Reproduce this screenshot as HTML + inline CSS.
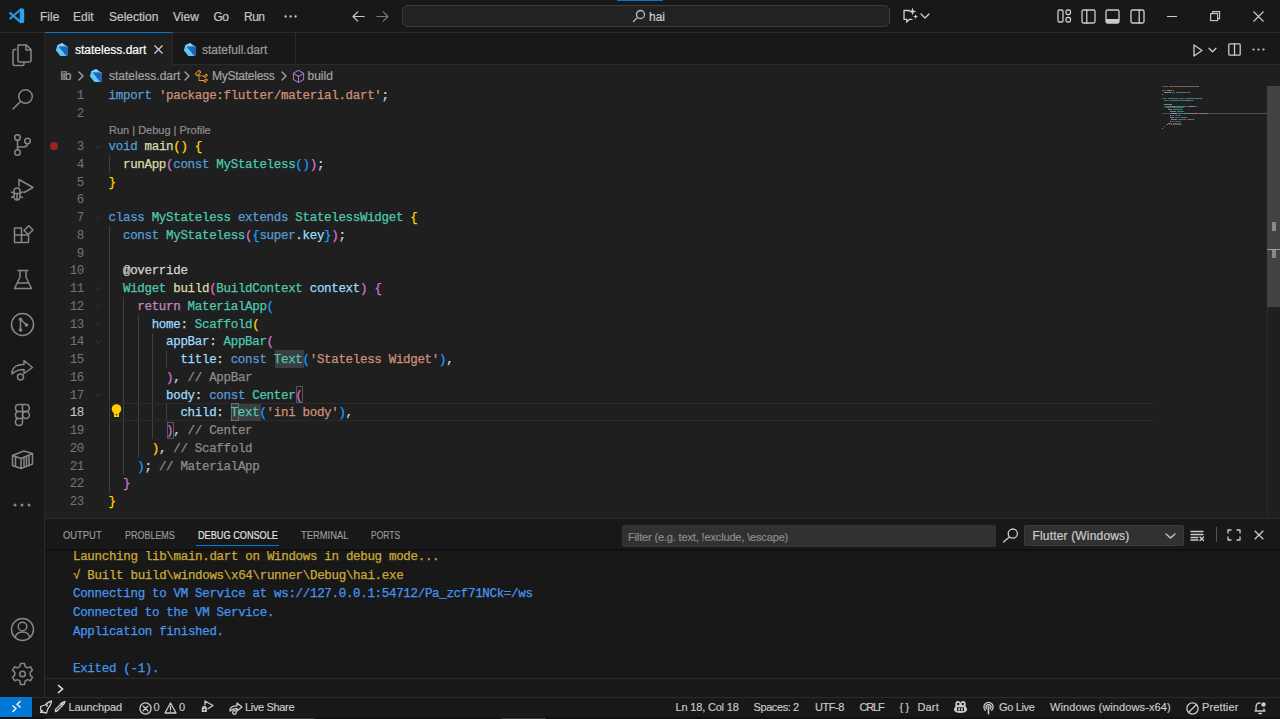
<!DOCTYPE html>
<html><head><meta charset="utf-8">
<style>
*{margin:0;padding:0;box-sizing:border-box}
html,body{width:1280px;height:719px;overflow:hidden;background:#1f1f1f;font-family:"Liberation Sans",sans-serif;color:#ccc}
div,span.a,svg{position:absolute}
svg{overflow:visible}
#title{left:0;top:0;width:1280px;height:33px;background:#181818;border-bottom:1px solid #2b2b2b}
.menu{-webkit-text-stroke:0.2px currentColor;top:9.7px;font-size:12px;color:#c4c4c4;line-height:14px;white-space:nowrap}
#act{left:0;top:33px;width:45px;height:664px;background:#181818;border-right:1px solid #2b2b2b}
#tabs{left:45px;top:33px;width:1235px;height:32px;background:#181818;border-bottom:1px solid #2b2b2b}
.tabt{-webkit-text-stroke:0.2px currentColor;font-size:12px;line-height:14px;white-space:nowrap}
#editor{left:45px;top:65px;width:1235px;height:453px;background:#1f1f1f}
.code{-webkit-text-stroke:0.25px currentColor;left:108.6px;font-family:"Liberation Mono",monospace;font-size:12.5px;letter-spacing:-0.32px;white-space:pre;line-height:17.75px;color:#d4d4d4}
.ln{left:43px;width:41px;font-family:"Liberation Mono",monospace;font-size:12.5px;letter-spacing:-0.32px;line-height:17.75px;color:#6e7681;text-align:right}
.ln.cur{color:#cccccc}
.guide{width:1px;background:#404040}
#panel{left:45px;top:518px;width:1235px;height:179px;background:#181818;border-top:1px solid #2b2b2b}
.ptab{-webkit-text-stroke:0.15px currentColor;top:529px;font-size:11px;line-height:13px;color:#9d9d9d;white-space:nowrap;transform-origin:0 0;transform:scaleX(0.84)}
.con{-webkit-text-stroke:0.25px currentColor;left:73px;font-family:"Liberation Mono",monospace;font-size:12.5px;letter-spacing:-0.32px;white-space:pre;line-height:18.5px}
#status{left:0;top:697px;width:1280px;height:22px;background:#181818;border-top:1px solid #2b2b2b}
.st{-webkit-text-stroke:0.15px currentColor;top:701.4px;font-size:11px;line-height:13px;color:#cccccc;white-space:nowrap}
.k{color:#569cd6}.s{color:#ce9178}.f{color:#dcdcaa}.c{color:#4ec9b0}.v{color:#9cdcfe}.p{color:#d4d4d4}.r{color:#c586c0}
.b1{color:#ffd700}.b2{color:#da70d6}.b3{color:#179fff}.cm{color:#8c8c8c}.at{color:#d4d4d4}
.ic{stroke:#cccccc;fill:none;stroke-width:1.3;stroke-linecap:round;stroke-linejoin:round}
.ia{stroke:#868686;fill:none;stroke-width:1.5;stroke-linecap:round;stroke-linejoin:round}
</style></head><body>
<!-- TITLE BAR -->
<div id="title"></div>
<svg style="left:0;top:0" width="30" height="30" viewBox="0 0 30 30"><path d="M10.2 13.2 L20.8 22.2" stroke="#1f9ce8" stroke-width="2.3" stroke-linecap="round"/><path d="M10.2 18.6 L20.8 9.3" stroke="#2a8fd0" stroke-width="2.1" stroke-linecap="round"/><rect x="19.8" y="8.4" width="4.4" height="14.6" rx="1.6" fill="#2ba3ee"/></svg>
<div class="menu" style="left:40px">File</div>
<div class="menu" style="left:73px">Edit</div>
<div class="menu" style="left:109px">Selection</div>
<div class="menu" style="left:173px">View</div>
<div class="menu" style="left:213.5px;letter-spacing:-0.5px">Go</div>
<div class="menu" style="left:244px;letter-spacing:-0.5px">Run</div>
<svg style="left:284px;top:14.5px" width="14" height="3"><circle cx="1.6" cy="1.5" r="1.15" fill="#ccc"/><circle cx="6.6" cy="1.5" r="1.15" fill="#ccc"/><circle cx="11.6" cy="1.5" r="1.15" fill="#ccc"/></svg>
<svg style="left:351.5px;top:10.5px" width="13" height="11" viewBox="0 0 13 11"><path class="ic" style="stroke-width:1.15" d="M1 5.5 H12.2 M5.8 0.8 L1 5.5 L5.8 10.2"/></svg>
<svg style="left:376px;top:10.5px" width="13" height="11" viewBox="0 0 13 11"><path class="ic" style="stroke:#7a7a7a;stroke-width:1.15" d="M0.8 5.5 H12 M7.2 0.8 L12 5.5 L7.2 10.2"/></svg>
<div style="left:617px;top:0;width:46px;height:1.3px;background:#0078d4"></div>
<div style="left:402px;top:5px;width:488px;height:22px;background:#222222;border:1px solid #3c3c3c;border-radius:6px"></div>
<svg style="left:632px;top:9px" width="14" height="14" viewBox="0 0 14 14"><circle class="ic" cx="8.5" cy="5.5" r="4" style="stroke:#bbb"/><path class="ic" style="stroke:#bbb" d="M5.6 8.4 L1.5 12.5"/></svg>
<div class="menu" style="left:649px;color:#cccccc">hai</div>
<svg style="left:902px;top:7px" width="18" height="17" viewBox="0 0 18 17"><path class="ic" d="M7.5 3.5 H2 V12.3 H4.8 L4.6 15 L7.6 12.3 H10"/><path fill="#ccc" d="M10.5 0.6 L11.5 3.4 L14.3 4.4 L11.5 5.4 L10.5 8.2 L9.5 5.4 L6.7 4.4 L9.5 3.4 Z M13.6 7 L14.3 8.9 L16.2 9.6 L14.3 10.3 L13.6 12.2 L12.9 10.3 L11 9.6 L12.9 8.9 Z"/></svg>
<svg style="left:920px;top:13px" width="10" height="6" viewBox="0 0 10 6"><path class="ic" d="M1 1 L5 5 L9 1"/></svg>
<svg style="left:1057px;top:9px" width="15" height="14" viewBox="0 0 15 14"><rect class="ic" x="1" y="1" width="5" height="12" rx="1.3"/><rect class="ic" x="9" y="1" width="4.5" height="4.5" rx="1.5"/><rect class="ic" x="9" y="8.5" width="4.5" height="4.5" rx="1.5"/></svg>
<svg style="left:1080.5px;top:8.5px" width="15" height="15" viewBox="0 0 15 15"><rect class="ic" x="1" y="1" width="13" height="13" rx="1.5"/><path class="ic" d="M5.8 1 V14"/></svg>
<svg style="left:1105px;top:8.5px" width="15" height="15" viewBox="0 0 15 15"><rect class="ic" x="1" y="1" width="13" height="13" rx="1.5"/><path d="M1 10 H14 V12.5 Q14 14 12.5 14 H2.5 Q1 14 1 12.5 Z" fill="#ccc"/></svg>
<svg style="left:1129.5px;top:8.5px" width="15" height="15" viewBox="0 0 15 15"><rect class="ic" x="1" y="1" width="13" height="13" rx="1.5"/><path class="ic" d="M9.2 1 V14"/></svg>
<div style="left:1167px;top:16px;width:10px;height:1px;background:#ccc"></div>
<svg style="left:1210px;top:11px" width="11" height="10" viewBox="0 0 11 10"><rect x="0.6" y="2.6" width="7" height="7" fill="none" stroke="#ccc" stroke-width="1.1"/><path d="M2.6 2.6 V0.6 H9.6 V7.6 H7.6" fill="none" stroke="#ccc" stroke-width="1.1"/></svg>
<svg style="left:1253px;top:11px" width="11" height="11" viewBox="0 0 11 11"><path d="M0.5 0.5 L10.5 10.5 M10.5 0.5 L0.5 10.5" stroke="#ccc" stroke-width="1.1"/></svg>

<!-- ACTIVITY BAR -->
<div id="act"></div>

<svg style="left:11px;top:43px" width="22" height="24" viewBox="0 0 22 24"><path class="ia" d="M5 6.5 H3.5 Q2 6.5 2 8 V21 Q2 22.5 3.5 22.5 H11.5 Q13 22.5 13 21 V19.5"/><path class="ia" d="M7 2 H15.5 L20 6.5 V17.5 Q20 19 18.5 19 H8.5 Q7 19 7 17.5 V3.5 Q7 2 8.5 2 Z M15 2 V7 H20"/></svg>
<svg style="left:11px;top:88px" width="24" height="24" viewBox="0 0 24 24"><circle class="ia" cx="14.5" cy="8.5" r="6.8"/><path class="ia" d="M9.6 13.4 L2 21"/></svg>
<svg style="left:12px;top:133px" width="22" height="24" viewBox="0 0 22 24"><circle class="ia" cx="5.5" cy="4.5" r="2.8"/><circle class="ia" cx="5.5" cy="19.5" r="2.8"/><circle class="ia" cx="15.5" cy="8" r="2.8"/><path class="ia" d="M5.5 7.3 V16.7 M15.5 10.8 Q15.5 14 11 14 H5.5"/></svg>
<svg style="left:10px;top:178px" width="25" height="24" viewBox="0 0 25 24"><path class="ia" d="M9 8 V1.5 L23 9.5 L14 14.5"/><path class="ia" d="M4 13 Q4 10 7 10 Q10 10 10 13 V18 Q10 22 7 22 Q4 22 4 18 Z M4 15.5 H10 M1.5 14 L4 15 M1.5 19.5 L4 18.5 M12.5 14 L10 15 M12.5 19.5 L10 18.5 M7 15.5 V22"/></svg>
<svg style="left:12px;top:223px" width="23" height="23" viewBox="0 0 23 23"><path class="ia" d="M2.5 5 H9.5 V12 H16.5 V19.5 H2.5 Z M9.5 12 V19.5 M2.5 12 H9.5"/><path class="ia" d="M13 8.5 L17.8 3.7 L22 8 L17.3 12.5 Z" transform="translate(-1 -1)"/></svg>
<svg style="left:13px;top:269px" width="20" height="22" viewBox="0 0 20 22"><path class="ia" d="M5 1.5 H15 M7 1.5 V8 L1.5 19.5 H18.5 L13 8 V1.5 M4.5 14 H15.5"/></svg>
<svg style="left:10px;top:312px" width="25" height="25" viewBox="0 0 25 25"><circle class="ia" cx="12.5" cy="12.5" r="11"/><circle cx="10.5" cy="7.3" r="1.8" fill="#868686"/><circle cx="16.5" cy="13" r="1.8" fill="#868686"/><circle cx="10.5" cy="18" r="1.8" fill="#868686"/><path class="ia" d="M10.5 7.3 V18 M10.5 7.3 L16.5 13"/></svg>
<svg style="left:10px;top:358px" width="25" height="24" viewBox="0 0 25 24"><path class="ia" d="M2 13.5 Q4 6 14 6.5 V2.5 L22.5 9.5 L14 15.5 V11.5 Q6.5 11.5 2 16 Z"/><circle class="ia" cx="10.5" cy="19" r="3"/></svg>
<svg style="left:14px;top:403px" width="17" height="24" viewBox="0 0 17 24"><path class="ia" d="M8.5 1.5 H4.8 Q1.5 1.5 1.5 5 Q1.5 8.5 4.8 8.5 H8.5 Z M8.5 1.5 H12 Q15.3 1.5 15.3 5 Q15.3 8.5 12 8.5 H8.5 M8.5 8.5 H4.8 Q1.5 8.5 1.5 12 Q1.5 15.5 4.8 15.5 H8.5 Z M8.5 15.5 V19 Q8.5 22.5 5 22.5 Q1.5 22.5 1.5 19 Q1.5 15.5 4.8 15.5"/><circle class="ia" cx="12" cy="12" r="3.4"/></svg>
<svg style="left:11px;top:449px" width="23" height="21" viewBox="0 0 23 21"><path class="ia" d="M1.5 6.5 L13 2 L21.5 4.5 L21.5 15 L10 19.5 L1.5 16.5 Z M1.5 6.5 L10 9.5 L21.5 4.5 M10 9.5 V19.5 M4.5 8 V17.5 M13 9.5 V17 M15.5 8.5 V16 M18 7.5 V15"/></svg>
<svg style="left:13px;top:502.8px" width="18" height="4"><circle cx="2" cy="2" r="1.5" fill="#868686"/><circle cx="9" cy="2" r="1.5" fill="#868686"/><circle cx="16" cy="2" r="1.5" fill="#868686"/></svg>
<svg style="left:10px;top:617px" width="25" height="25" viewBox="0 0 25 25"><circle class="ia" cx="12.5" cy="12.5" r="11"/><circle class="ia" cx="12.5" cy="9.5" r="4.3"/><path class="ia" d="M5 20.5 Q6.5 15 12.5 15 Q18.5 15 20 20.5"/></svg>
<svg style="left:10px;top:662px" width="25" height="24" viewBox="0 0 25 24"><path class="ia" d="M10.5 1.5 H14.5 L15.2 4.6 L17.6 5.9 L20.5 4.8 L22.5 8.3 L20.2 10.4 V13.1 L22.5 15.2 L20.5 18.7 L17.6 17.6 L15.2 18.9 L14.5 22.5 H10.5 L9.8 18.9 L7.4 17.6 L4.5 18.7 L2.5 15.2 L4.8 13.1 V10.4 L2.5 8.3 L4.5 4.8 L7.4 5.9 L9.8 4.6 Z"/><circle class="ia" cx="12.5" cy="12" r="2.8"/></svg>


<!-- TABS -->
<div id="tabs"></div>
<div style="left:45px;top:32px;width:128px;height:33px;background:#1f1f1f;border-top:1px solid #0078d4;border-right:1px solid #2b2b2b"></div>
<div style="left:173px;top:33px;width:123px;height:32px;border-right:1px solid #2b2b2b"></div>
<svg style="left:55px;top:42px" width="14" height="14" viewBox="0 0 14 14"><path fill="#5cc6f6" d="M7.2 1 L13 4.9 L13 13.1 L11.2 14 L5.4 14 L0.8 8.2 L2.3 3.3 Z"/><path fill="#1f64b5" d="M3.5 4.3 L10 4.2 L13 5.6 L13 13 L11.3 14 Z"/><path fill="#8ad8fa" d="M7.2 1 L10 4.2 L3.5 4.3 L2.3 3.3 Z" opacity="0.8"/></svg><svg style="left:183px;top:42px" width="14" height="14" viewBox="0 0 14 14"><path fill="#5cc6f6" d="M7.2 1 L13 4.9 L13 13.1 L11.2 14 L5.4 14 L0.8 8.2 L2.3 3.3 Z"/><path fill="#1f64b5" d="M3.5 4.3 L10 4.2 L13 5.6 L13 13 L11.3 14 Z"/><path fill="#8ad8fa" d="M7.2 1 L10 4.2 L3.5 4.3 L2.3 3.3 Z" opacity="0.8"/></svg>
<div class="tabt" style="left:75px;top:43px;color:#ffffff">stateless.dart</div>
<svg style="left:154px;top:45px" width="9" height="9" viewBox="0 0 9 9"><path d="M0.5 0.5 L8.5 8.5 M8.5 0.5 L0.5 8.5" stroke="#ccc" stroke-width="1.3"/></svg>
<div class="tabt" style="left:202px;top:43px;color:#9d9d9d">statefull.dart</div>
<svg style="left:1193px;top:44px" width="10" height="13" viewBox="0 0 10 13"><path class="ic" d="M1 1 L9 6.5 L1 12 Z"/></svg>
<svg style="left:1208px;top:47px" width="9" height="6" viewBox="0 0 9 6"><path class="ic" d="M1 1.2 L4.5 4.7 L8 1.2"/></svg>
<svg style="left:1228px;top:43px" width="13" height="13" viewBox="0 0 13 13"><rect class="ic" x="0.8" y="0.8" width="11.4" height="11.4" rx="1"/><path class="ic" d="M6.5 0.8 V12.2"/></svg>
<svg style="left:1252px;top:48px" width="13" height="3"><circle cx="1.5" cy="1.5" r="1.1" fill="#ccc"/><circle cx="6.5" cy="1.5" r="1.1" fill="#ccc"/><circle cx="11.5" cy="1.5" r="1.1" fill="#ccc"/></svg>

<!-- EDITOR -->
<div id="editor"></div>
<!-- breadcrumbs -->
<div class="tabt" style="left:60.5px;top:69px;color:#a3a3a3;letter-spacing:-0.5px">lib</div>
<svg style="left:78px;top:71px" width="6" height="10" viewBox="0 0 6 10"><path class="ic" style="stroke:#a9a9a9" d="M1 1 L5 5 L1 9"/></svg>
<svg style="left:89px;top:68px" width="14" height="14" viewBox="0 0 14 14"><path fill="#5cc6f6" d="M7.2 1 L13 4.9 L13 13.1 L11.2 14 L5.4 14 L0.8 8.2 L2.3 3.3 Z"/><path fill="#1f64b5" d="M3.5 4.3 L10 4.2 L13 5.6 L13 13 L11.3 14 Z"/><path fill="#8ad8fa" d="M7.2 1 L10 4.2 L3.5 4.3 L2.3 3.3 Z" opacity="0.8"/></svg>
<div class="tabt" style="left:109px;top:69px;color:#a3a3a3">stateless.dart</div>
<svg style="left:184px;top:71px" width="6" height="10" viewBox="0 0 6 10"><path class="ic" style="stroke:#a9a9a9" d="M1 1 L5 5 L1 9"/></svg>
<svg style="left:194px;top:68.5px" width="15" height="15" viewBox="0 0 16 16"><path fill="#ee9d28" d="M11.34 9.71h.71l2.67-2.67v-.71L13.38 5h-.7l-1.82 1.81h-5V5.56l1.86-1.85V3l-2-2H5L1 5v.71l2 2h.71l1.14-1.15v5.79l.5.5H10v.52l1.33 1.34h.71l2.67-2.670v-.71L13.37 10h-.7l-1.86 1.85h-5v-4H10v.48l1.34 1.38zm1.69-3.65l.63.63-2 2-.63-.63 2-2zm0 5l.63.63-2 2-.63-.63 2-2zM3.350 6.65L2.06 5.36 5.34 2.08l1.29 1.29-3.28 3.28z"/></svg>
<div class="tabt" style="left:212px;top:69px;color:#a3a3a3;letter-spacing:-0.25px">MyStateless</div>
<svg style="left:281px;top:71px" width="6" height="10" viewBox="0 0 6 10"><path class="ic" style="stroke:#a9a9a9" d="M1 1 L5 5 L1 9"/></svg>
<svg style="left:290.5px;top:68.5px" width="15" height="15" viewBox="0 0 16 16"><path fill="#b180d7" d="M13.51 4l-5-3h-1l-5 3-.49.86v6l.49.85 5 3h1l5-3 .49-.85v-6L13.51 4zm-6 9.56l-4.5-2.7V5.7l4.5 2.45v5.41zM3.27 4.7l4.74-2.84 4.74 2.84-4.74 2.59L3.27 4.7zm9.74 6.160l-4.5 2.7V8.15l4.5-2.45v5.16z"/></svg>
<div class="tabt" style="left:307.5px;top:69px;color:#a3a3a3">build</div>

<div class="guide" style="left:109.00px;top:155.25px;height:17.75px"></div>
<div class="guide" style="left:109.00px;top:226.25px;height:266.25px"></div>
<div class="guide" style="left:123.36px;top:297.25px;height:177.50px"></div>
<div class="guide" style="left:137.72px;top:315.00px;height:142.00px"></div>
<div class="guide" style="left:152.08px;top:332.75px;height:106.50px"></div>
<div class="guide" style="left:166.44px;top:350.50px;height:17.75px"></div>
<div class="guide" style="left:166.44px;top:403.75px;height:17.75px"></div>
<!-- highlights -->
<div style="left:109px;top:403.3px;width:1046px;height:17.8px;border-top:1px solid #2a2a2a;border-bottom:1px solid #2a2a2a"></div>
<div style="left:274.6px;top:350px;width:29px;height:17.5px;background:#3a3d41"></div>
<div style="left:231.4px;top:403.8px;width:29.2px;height:17.3px;background:#3a3d41"></div>
<div style="left:231.3px;top:403.4px;width:7.6px;height:17.9px;border:1px solid #6e6e6e"></div>
<div style="left:296px;top:385.7px;width:7.4px;height:17.8px;border:1px solid #585858"></div>
<div style="left:166.9px;top:421.5px;width:7.2px;height:17.8px;border:1px solid #585858"></div>
<div class="tabt" style="left:109px;top:122.5px;font-size:11px;color:#8f8f8f">Run | Debug | Profile</div>
<div class="ln" style="top:88.25px">1</div>
<div class="code" style="top:88.25px"><span class="k">import</span><span class="p"> </span><span class="s">&#x27;package:flutter/material.dart&#x27;</span><span class="p">;</span></div>
<div class="ln" style="top:106.00px">2</div>
<div class="ln" style="top:139.10px">3</div>
<div class="code" style="top:139.10px"><span class="k">void</span><span class="p"> </span><span class="f">main</span><span class="b1">()</span><span class="p"> </span><span class="b1">{</span></div>
<div class="ln" style="top:156.85px">4</div>
<div class="code" style="top:156.85px"><span class="p">  </span><span class="f">runApp</span><span class="b2">(</span><span class="k">const</span><span class="p"> </span><span class="c">MyStateless</span><span class="b3">()</span><span class="b2">)</span><span class="p">;</span></div>
<div class="ln" style="top:174.60px">5</div>
<div class="code" style="top:174.60px"><span class="b1">}</span></div>
<div class="ln" style="top:192.35px">6</div>
<div class="ln" style="top:210.10px">7</div>
<div class="code" style="top:210.10px"><span class="k">class</span><span class="p"> </span><span class="c">MyStateless</span><span class="p"> </span><span class="k">extends</span><span class="p"> </span><span class="c">StatelessWidget</span><span class="p"> </span><span class="b1">{</span></div>
<div class="ln" style="top:227.85px">8</div>
<div class="code" style="top:227.85px"><span class="p">  </span><span class="k">const</span><span class="p"> </span><span class="c">MyStateless</span><span class="b2">(</span><span class="b3">{</span><span class="k">super</span><span class="p">.</span><span class="v">key</span><span class="b3">}</span><span class="b2">)</span><span class="p">;</span></div>
<div class="ln" style="top:245.60px">9</div>
<div class="ln" style="top:263.35px">10</div>
<div class="code" style="top:263.35px"><span class="p">  </span><span class="at">@override</span></div>
<div class="ln" style="top:281.10px">11</div>
<div class="code" style="top:281.10px"><span class="p">  </span><span class="c">Widget</span><span class="p"> </span><span class="f">build</span><span class="b2">(</span><span class="c">BuildContext</span><span class="p"> </span><span class="v">context</span><span class="b2">)</span><span class="p"> </span><span class="b2">{</span></div>
<div class="ln" style="top:298.85px">12</div>
<div class="code" style="top:298.85px"><span class="p">    </span><span class="r">return</span><span class="p"> </span><span class="c">MaterialApp</span><span class="b3">(</span></div>
<div class="ln" style="top:316.60px">13</div>
<div class="code" style="top:316.60px"><span class="p">      </span><span class="v">home</span><span class="p">: </span><span class="c">Scaffold</span><span class="b1">(</span></div>
<div class="ln" style="top:334.35px">14</div>
<div class="code" style="top:334.35px"><span class="p">        </span><span class="v">appBar</span><span class="p">: </span><span class="c">AppBar</span><span class="b2">(</span></div>
<div class="ln" style="top:352.10px">15</div>
<div class="code" style="top:352.10px"><span class="p">          </span><span class="v">title</span><span class="p">: </span><span class="k">const</span><span class="p"> </span><span class="c">Text</span><span class="b3">(</span><span class="s">&#x27;Stateless Widget&#x27;</span><span class="b3">)</span><span class="p">,</span></div>
<div class="ln" style="top:369.85px">16</div>
<div class="code" style="top:369.85px"><span class="p">        </span><span class="b2">)</span><span class="p">, </span><span class="cm">// AppBar</span></div>
<div class="ln" style="top:387.60px">17</div>
<div class="code" style="top:387.60px"><span class="p">        </span><span class="v">body</span><span class="p">: </span><span class="k">const</span><span class="p"> </span><span class="c">Center</span><span class="b2">(</span></div>
<div class="ln cur" style="top:405.35px">18</div>
<div class="code" style="top:405.35px"><span class="p">          </span><span class="v">child</span><span class="p">: </span><span class="c">Text</span><span class="b3">(</span><span class="s">&#x27;ini body&#x27;</span><span class="b3">)</span><span class="p">,</span></div>
<div class="ln" style="top:423.10px">19</div>
<div class="code" style="top:423.10px"><span class="p">        </span><span class="b2">)</span><span class="p">, </span><span class="cm">// Center</span></div>
<div class="ln" style="top:440.85px">20</div>
<div class="code" style="top:440.85px"><span class="p">      </span><span class="b1">)</span><span class="p">, </span><span class="cm">// Scaffold</span></div>
<div class="ln" style="top:458.60px">21</div>
<div class="code" style="top:458.60px"><span class="p">    </span><span class="b3">)</span><span class="p">; </span><span class="cm">// MaterialApp</span></div>
<div class="ln" style="top:476.35px">22</div>
<div class="code" style="top:476.35px"><span class="p">  </span><span class="b2">}</span></div>
<div class="ln" style="top:494.10px">23</div>
<div class="code" style="top:494.10px"><span class="b1">}</span></div>
<!-- breakpoint -->
<div style="left:50.2px;top:142px;width:8px;height:8px;border-radius:50%;background:#9b2323"></div>
<!-- fold chevrons -->
<svg style="left:94px;top:143.50px" width="9" height="6" viewBox="0 0 9 6"><path d="M1 1 L4.5 4.5 L8 1" fill="none" stroke="#2e2e2e" stroke-width="1.1"/></svg>
<svg style="left:94px;top:214.50px" width="9" height="6" viewBox="0 0 9 6"><path d="M1 1 L4.5 4.5 L8 1" fill="none" stroke="#2e2e2e" stroke-width="1.1"/></svg>
<svg style="left:94px;top:285.50px" width="9" height="6" viewBox="0 0 9 6"><path d="M1 1 L4.5 4.5 L8 1" fill="none" stroke="#2e2e2e" stroke-width="1.1"/></svg>
<svg style="left:94px;top:303.25px" width="9" height="6" viewBox="0 0 9 6"><path d="M1 1 L4.5 4.5 L8 1" fill="none" stroke="#2e2e2e" stroke-width="1.1"/></svg>
<svg style="left:94px;top:321.00px" width="9" height="6" viewBox="0 0 9 6"><path d="M1 1 L4.5 4.5 L8 1" fill="none" stroke="#2e2e2e" stroke-width="1.1"/></svg>
<svg style="left:94px;top:338.75px" width="9" height="6" viewBox="0 0 9 6"><path d="M1 1 L4.5 4.5 L8 1" fill="none" stroke="#2e2e2e" stroke-width="1.1"/></svg>
<svg style="left:94px;top:392.00px" width="9" height="6" viewBox="0 0 9 6"><path d="M1 1 L4.5 4.5 L8 1" fill="none" stroke="#2e2e2e" stroke-width="1.1"/></svg>
<!-- lightbulb -->
<svg style="left:111px;top:404px" width="11" height="14" viewBox="0 0 11 14"><circle cx="5.5" cy="5" r="4.8" fill="#ffcc00"/><rect x="3" y="8" width="5" height="5" fill="#ffcc00"/><rect x="4.8" y="10" width="1.4" height="1.4" fill="#1f1f1f"/></svg>
<!-- minimap -->
<div style="left:1162px;top:112.8px;width:105px;height:1.3px;background:#4f4f4f"></div><div style="left:1162.00px;top:86px;width:5.64px;height:1px;background:#569cd6;opacity:0.55"></div><div style="left:1168.58px;top:86px;width:29.14px;height:1px;background:#ce9178;opacity:0.55"></div><div style="left:1197.72px;top:86px;width:0.94px;height:1px;background:#d4d4d4;opacity:0.55"></div><div style="left:1162.00px;top:90px;width:3.76px;height:1px;background:#569cd6;opacity:0.55"></div><div style="left:1166.70px;top:90px;width:3.76px;height:1px;background:#dcdcaa;opacity:0.55"></div><div style="left:1170.46px;top:90px;width:1.88px;height:1px;background:#ffd700;opacity:0.55"></div><div style="left:1173.28px;top:90px;width:0.94px;height:1px;background:#ffd700;opacity:0.55"></div><div style="left:1163.88px;top:92px;width:5.64px;height:1px;background:#dcdcaa;opacity:0.55"></div><div style="left:1169.52px;top:92px;width:0.94px;height:1px;background:#da70d6;opacity:0.55"></div><div style="left:1170.46px;top:92px;width:4.70px;height:1px;background:#569cd6;opacity:0.55"></div><div style="left:1176.10px;top:92px;width:10.34px;height:1px;background:#4ec9b0;opacity:0.55"></div><div style="left:1186.44px;top:92px;width:1.88px;height:1px;background:#179fff;opacity:0.55"></div><div style="left:1188.32px;top:92px;width:0.94px;height:1px;background:#da70d6;opacity:0.55"></div><div style="left:1189.26px;top:92px;width:0.94px;height:1px;background:#d4d4d4;opacity:0.55"></div><div style="left:1162.00px;top:94px;width:0.94px;height:1px;background:#ffd700;opacity:0.55"></div><div style="left:1162.00px;top:98px;width:4.70px;height:1px;background:#569cd6;opacity:0.55"></div><div style="left:1167.64px;top:98px;width:10.34px;height:1px;background:#4ec9b0;opacity:0.55"></div><div style="left:1178.92px;top:98px;width:6.58px;height:1px;background:#569cd6;opacity:0.55"></div><div style="left:1186.44px;top:98px;width:14.10px;height:1px;background:#4ec9b0;opacity:0.55"></div><div style="left:1201.48px;top:98px;width:0.94px;height:1px;background:#ffd700;opacity:0.55"></div><div style="left:1163.88px;top:100px;width:4.70px;height:1px;background:#569cd6;opacity:0.55"></div><div style="left:1169.52px;top:100px;width:10.34px;height:1px;background:#4ec9b0;opacity:0.55"></div><div style="left:1179.86px;top:100px;width:0.94px;height:1px;background:#da70d6;opacity:0.55"></div><div style="left:1180.80px;top:100px;width:0.94px;height:1px;background:#179fff;opacity:0.55"></div><div style="left:1181.74px;top:100px;width:4.70px;height:1px;background:#569cd6;opacity:0.55"></div><div style="left:1186.44px;top:100px;width:0.94px;height:1px;background:#d4d4d4;opacity:0.55"></div><div style="left:1187.38px;top:100px;width:2.82px;height:1px;background:#9cdcfe;opacity:0.55"></div><div style="left:1190.20px;top:100px;width:0.94px;height:1px;background:#179fff;opacity:0.55"></div><div style="left:1191.14px;top:100px;width:0.94px;height:1px;background:#da70d6;opacity:0.55"></div><div style="left:1192.08px;top:100px;width:0.94px;height:1px;background:#d4d4d4;opacity:0.55"></div><div style="left:1163.88px;top:104px;width:8.46px;height:1px;background:#d4d4d4;opacity:0.55"></div><div style="left:1163.88px;top:106px;width:5.64px;height:1px;background:#4ec9b0;opacity:0.55"></div><div style="left:1170.46px;top:106px;width:4.70px;height:1px;background:#dcdcaa;opacity:0.55"></div><div style="left:1175.16px;top:106px;width:0.94px;height:1px;background:#da70d6;opacity:0.55"></div><div style="left:1176.10px;top:106px;width:11.28px;height:1px;background:#4ec9b0;opacity:0.55"></div><div style="left:1188.32px;top:106px;width:6.58px;height:1px;background:#9cdcfe;opacity:0.55"></div><div style="left:1194.90px;top:106px;width:0.94px;height:1px;background:#da70d6;opacity:0.55"></div><div style="left:1196.78px;top:106px;width:0.94px;height:1px;background:#da70d6;opacity:0.55"></div><div style="left:1165.76px;top:107px;width:5.64px;height:1px;background:#c586c0;opacity:0.55"></div><div style="left:1172.34px;top:107px;width:10.34px;height:1px;background:#4ec9b0;opacity:0.55"></div><div style="left:1182.68px;top:107px;width:0.94px;height:1px;background:#179fff;opacity:0.55"></div><div style="left:1167.64px;top:109px;width:3.76px;height:1px;background:#9cdcfe;opacity:0.55"></div><div style="left:1171.40px;top:109px;width:0.94px;height:1px;background:#d4d4d4;opacity:0.55"></div><div style="left:1173.28px;top:109px;width:7.52px;height:1px;background:#4ec9b0;opacity:0.55"></div><div style="left:1180.80px;top:109px;width:0.94px;height:1px;background:#ffd700;opacity:0.55"></div><div style="left:1169.52px;top:111px;width:5.64px;height:1px;background:#9cdcfe;opacity:0.55"></div><div style="left:1175.16px;top:111px;width:0.94px;height:1px;background:#d4d4d4;opacity:0.55"></div><div style="left:1177.04px;top:111px;width:5.64px;height:1px;background:#4ec9b0;opacity:0.55"></div><div style="left:1182.68px;top:111px;width:0.94px;height:1px;background:#da70d6;opacity:0.55"></div><div style="left:1171.40px;top:113px;width:4.70px;height:1px;background:#9cdcfe;opacity:0.55"></div><div style="left:1176.10px;top:113px;width:0.94px;height:1px;background:#d4d4d4;opacity:0.55"></div><div style="left:1177.98px;top:113px;width:4.70px;height:1px;background:#569cd6;opacity:0.55"></div><div style="left:1183.62px;top:113px;width:3.76px;height:1px;background:#4ec9b0;opacity:0.55"></div><div style="left:1187.38px;top:113px;width:0.94px;height:1px;background:#179fff;opacity:0.55"></div><div style="left:1188.32px;top:113px;width:9.40px;height:1px;background:#ce9178;opacity:0.55"></div><div style="left:1198.66px;top:113px;width:6.58px;height:1px;background:#ce9178;opacity:0.55"></div><div style="left:1205.24px;top:113px;width:0.94px;height:1px;background:#179fff;opacity:0.55"></div><div style="left:1206.18px;top:113px;width:0.94px;height:1px;background:#d4d4d4;opacity:0.55"></div><div style="left:1169.52px;top:115px;width:0.94px;height:1px;background:#da70d6;opacity:0.55"></div><div style="left:1170.46px;top:115px;width:0.94px;height:1px;background:#d4d4d4;opacity:0.55"></div><div style="left:1172.34px;top:115px;width:1.88px;height:1px;background:#8c8c8c;opacity:0.55"></div><div style="left:1175.16px;top:115px;width:5.64px;height:1px;background:#8c8c8c;opacity:0.55"></div><div style="left:1169.52px;top:117px;width:3.76px;height:1px;background:#9cdcfe;opacity:0.55"></div><div style="left:1173.28px;top:117px;width:0.94px;height:1px;background:#d4d4d4;opacity:0.55"></div><div style="left:1175.16px;top:117px;width:4.70px;height:1px;background:#569cd6;opacity:0.55"></div><div style="left:1180.80px;top:117px;width:5.64px;height:1px;background:#4ec9b0;opacity:0.55"></div><div style="left:1186.44px;top:117px;width:0.94px;height:1px;background:#da70d6;opacity:0.55"></div><div style="left:1171.40px;top:119px;width:4.70px;height:1px;background:#9cdcfe;opacity:0.55"></div><div style="left:1176.10px;top:119px;width:0.94px;height:1px;background:#d4d4d4;opacity:0.55"></div><div style="left:1177.98px;top:119px;width:3.76px;height:1px;background:#4ec9b0;opacity:0.55"></div><div style="left:1181.74px;top:119px;width:0.94px;height:1px;background:#179fff;opacity:0.55"></div><div style="left:1182.68px;top:119px;width:3.76px;height:1px;background:#ce9178;opacity:0.55"></div><div style="left:1187.38px;top:119px;width:4.70px;height:1px;background:#ce9178;opacity:0.55"></div><div style="left:1192.08px;top:119px;width:0.94px;height:1px;background:#179fff;opacity:0.55"></div><div style="left:1193.02px;top:119px;width:0.94px;height:1px;background:#d4d4d4;opacity:0.55"></div><div style="left:1169.52px;top:121px;width:0.94px;height:1px;background:#da70d6;opacity:0.55"></div><div style="left:1170.46px;top:121px;width:0.94px;height:1px;background:#d4d4d4;opacity:0.55"></div><div style="left:1172.34px;top:121px;width:1.88px;height:1px;background:#8c8c8c;opacity:0.55"></div><div style="left:1175.16px;top:121px;width:5.64px;height:1px;background:#8c8c8c;opacity:0.55"></div><div style="left:1167.64px;top:123px;width:0.94px;height:1px;background:#ffd700;opacity:0.55"></div><div style="left:1168.58px;top:123px;width:0.94px;height:1px;background:#d4d4d4;opacity:0.55"></div><div style="left:1170.46px;top:123px;width:1.88px;height:1px;background:#8c8c8c;opacity:0.55"></div><div style="left:1173.28px;top:123px;width:7.52px;height:1px;background:#8c8c8c;opacity:0.55"></div><div style="left:1165.76px;top:124px;width:0.94px;height:1px;background:#179fff;opacity:0.55"></div><div style="left:1166.70px;top:124px;width:0.94px;height:1px;background:#d4d4d4;opacity:0.55"></div><div style="left:1168.58px;top:124px;width:1.88px;height:1px;background:#8c8c8c;opacity:0.55"></div><div style="left:1171.40px;top:124px;width:10.34px;height:1px;background:#8c8c8c;opacity:0.55"></div><div style="left:1163.88px;top:126px;width:0.94px;height:1px;background:#da70d6;opacity:0.55"></div><div style="left:1162.00px;top:128px;width:0.94px;height:1px;background:#ffd700;opacity:0.55"></div>
<!-- scrollbar -->
<div style="left:1267px;top:307px;width:1px;height:212px;background:#2b2b2b"></div>
<div style="left:1267px;top:86px;width:13px;height:221px;background:#434343"></div>
<div style="left:1272px;top:222px;width:4px;height:9px;background:#8a8a8a"></div>
<div style="left:1267px;top:248.5px;width:13px;height:1.5px;background:#a0a0a0"></div>
<div style="left:1272px;top:250px;width:4px;height:8px;background:#8a8a8a"></div>

<!-- PANEL -->
<div id="panel"></div>
<div class="ptab" style="left:63px;transform:scaleX(0.854)">OUTPUT</div>
<div class="ptab" style="left:124.5px;transform:scaleX(0.815)">PROBLEMS</div>
<div class="ptab" style="left:197.5px;color:#e7e7e7;transform:scaleX(0.833)">DEBUG CONSOLE</div>
<div style="left:196px;top:544.5px;width:83px;height:1px;background:#0078d4"></div>
<div class="ptab" style="left:300.5px;transform:scaleX(0.854)">TERMINAL</div>
<div class="ptab" style="left:371px;transform:scaleX(0.77)">PORTS</div>
<div style="left:621.5px;top:524.5px;width:374px;height:22px;background:#313131;border:1px solid #333;border-radius:2px"></div>
<div class="tabt" style="left:628px;top:529.5px;font-size:11px;color:#8c8c8c;letter-spacing:-0.15px">Filter (e.g. text, !exclude, \escape)</div>
<svg style="left:1002px;top:528px" width="17" height="15" viewBox="0 0 17 15"><circle class="ic" cx="10.8" cy="5.6" r="4.6"/><path class="ic" d="M7.4 9 L1.6 14"/></svg>
<div style="left:1024px;top:524.5px;width:160px;height:21.5px;background:#313131;border:1px solid #3c3c3c;border-radius:2px"></div>
<div class="tabt" style="left:1032.5px;top:529px;color:#cccccc;letter-spacing:0.17px">Flutter (Windows)</div>
<svg style="left:1165px;top:533px" width="11" height="6" viewBox="0 0 11 6"><path class="ic" d="M1 1 L5.5 5 L10 1"/></svg>
<svg style="left:1190px;top:530px" width="15" height="11" viewBox="0 0 15 11"><path class="ic" d="M1 1.5 H13 M1 4.5 H13 M1 7.5 H8 M1 10 H8 M10 7 L13.5 10.5 M13.5 7 L10 10.5"/></svg>
<div style="left:1215.5px;top:527px;width:1px;height:15px;background:#555"></div>
<svg style="left:1227px;top:529px" width="14" height="12" viewBox="0 0 14 12"><path class="ic" d="M1 4 V1 H4 M10 1 H13 V4 M13 8 V11 H10 M4 11 H1 V8"/></svg>
<svg style="left:1254px;top:530px" width="10" height="10" viewBox="0 0 10 10"><path d="M0.7 0.7 L9.3 9.3 M9.3 0.7 L0.7 9.3" stroke="#ccc" stroke-width="1.3"/></svg>
<div class="con" style="top:547.9px;color:#c9aa3a">Launching lib\main.dart on Windows in debug mode...</div>
<div class="con" style="top:566.6px;color:#c9aa3a">√ Built build\windows\x64\runner\Debug\hai.exe</div>
<div class="con" style="top:585.3px;color:#4595f0">Connecting to VM Service at ws://127.0.0.1:54712/Pa_zcf71NCk=/ws</div>
<div class="con" style="top:603.9px;color:#4595f0">Connected to the VM Service.</div>
<div class="con" style="top:622.6px;color:#4595f0">Application finished.</div>
<div class="con" style="top:660.0px;color:#4595f0">Exited (-1).</div>
<div style="left:45px;top:549.3px;width:1235px;height:1.7px;background:#101010"></div>
<div style="left:45px;top:678px;width:1235px;height:1px;background:#2b2b2b"></div>
<svg style="left:57px;top:684px" width="7" height="10" viewBox="0 0 7 10"><path d="M1 1 L5.5 5 L1 9" fill="none" stroke="#e0e0e0" stroke-width="1.6"/></svg>

<!-- STATUS BAR -->
<div id="status"></div>
<div style="left:0;top:697px;width:32px;height:20px;background:#0078d4"></div>
<svg style="left:11px;top:700px" width="11" height="13" viewBox="0 0 11 13"><path d="M1.5 5.5 L5 8.5 L1.5 12 M9.5 1 L6 4.2 L9.5 7.5" fill="none" stroke="#fff" stroke-width="1.3"/></svg>

<svg style="left:36px;top:698px" width="34" height="18" viewBox="0 0 34 18"><path class="ic" d="M5 14 L4.5 8.5 L9 7 Q13 3.5 15.5 3 Q15.5 6 12 10.5 L10.5 15 Z M4.5 14.5 L6.5 12.5"/><circle cx="11" cy="7.6" r="1.1" fill="#ccc"/><path class="ic" d="M19.5 13.5 Q19 11 21 10 L25 6 Q26.5 4 29 3.5 Q28.5 6 26.5 7.5 L22.5 11.5 Q21 13.5 19.5 13.5 Z"/><circle cx="25.5" cy="6" r="1" fill="none" stroke="#ccc" stroke-width="1.1"/></svg>
<div class="st" style="left:68.5px;letter-spacing:-0.09px">Launchpad</div>
<svg style="left:138.5px;top:701.5px" width="13" height="13" viewBox="0 0 13 13"><circle class="ic" cx="6.5" cy="6.5" r="5.6"/><path class="ic" d="M4.2 4.2 L8.8 8.8 M8.8 4.2 L4.2 8.8"/></svg>
<div class="st" style="left:153.5px">0</div>
<svg style="left:163.5px;top:701.5px" width="13" height="12" viewBox="0 0 13 12"><path class="ic" d="M6.5 1 L12 11 H1 Z M6.5 4.5 V7.5"/><circle cx="6.5" cy="9.2" r="0.6" fill="#ccc"/></svg>
<div class="st" style="left:179px">0</div>
<svg style="left:200px;top:700px" width="15" height="13" viewBox="0 0 15 13"><path class="ic" d="M5 4.5 V1 L13 5.5 L8 8.8"/><path d="M1.8 7.5 H6.8 V12 H1.8 Z" fill="#ccc"/><circle cx="4.3" cy="9.7" r="0.9" fill="#181818"/><path class="ic" d="M2.8 7.5 Q4.3 5.5 5.8 7.5"/></svg>
<svg style="left:228.5px;top:701.5px" width="14" height="13" viewBox="0 0 14 13"><path class="ic" d="M1 7.5 Q2.5 3.5 8 3.8 V1 L13 5 L8 9 V6.5 Q4 6.5 1 9 Z"/><circle class="ic" cx="5.5" cy="10.5" r="1.8"/></svg>
<div class="st" style="left:245px;letter-spacing:-0.34px">Live Share</div>
<div class="st" style="left:675.5px;letter-spacing:-0.18px">Ln 18, Col 18</div>
<div class="st" style="left:753.5px;letter-spacing:-0.4px">Spaces: 2</div>
<div class="st" style="left:815px;letter-spacing:-0.45px">UTF-8</div>
<div class="st" style="left:859.5px;letter-spacing:-1.2px">CRLF</div>
<div class="st" style="left:899.5px">{&#8201;}</div>
<div class="st" style="left:917.5px;letter-spacing:0.15px">Dart</div>
<svg style="left:953px;top:700px" width="15" height="14" viewBox="0 0 15 14"><path fill="#ccc" d="M2.5 6.5 Q1.5 1 5 1 Q7.5 1 7.5 3.5 Q7.5 1 10 1 Q13.5 1 12.5 6.5 Q14.5 8 14 10.5 Q12 13 7.5 13 Q3 13 1 10.5 Q0.5 8 2.5 6.5 Z"/><circle cx="5.2" cy="4" r="1.2" fill="#181818"/><circle cx="9.8" cy="4" r="1.2" fill="#181818"/><rect x="4" y="7.3" width="7" height="3.7" fill="#181818"/><rect x="5.2" y="8" width="1.8" height="2.6" fill="#bbb"/><rect x="8" y="8" width="1.8" height="2.6" fill="#bbb"/></svg>
<svg style="left:983px;top:700.5px" width="11" height="14" viewBox="0 0 11 14"><path class="ic" d="M2.3 9.3 A4.6 4.6 0 1 1 8.7 9.3 M3.7 7.6 A2.4 2.4 0 1 1 7.3 7.6"/><path d="M5.5 5.5 V12.8" stroke="#ccc" stroke-width="1.6" stroke-linecap="round"/></svg>
<div class="st" style="left:999px;letter-spacing:-0.36px">Go Live</div>
<div class="st" style="left:1050px;letter-spacing:0.1px">Windows (windows-x64)</div>
<svg style="left:1185.5px;top:701.5px" width="13" height="13" viewBox="0 0 13 13"><circle class="ic" cx="6.5" cy="6.5" r="5.6"/><path class="ic" d="M2.5 10.5 L10.5 2.5"/></svg>
<div class="st" style="left:1202px;letter-spacing:0.12px">Prettier</div>
<svg style="left:1254px;top:700.5px" width="12" height="14" viewBox="0 0 12 14"><path class="ic" d="M6 2 Q2 2 2 6 V10 H1 H11 H10 V8 M5 12.5 H7.5"/><circle cx="9.5" cy="3.5" r="2.2" fill="#ccc"/></svg>

<div style="left:0;top:717px;width:1280px;height:2px;background:#111111"></div>
<div style="left:45px;top:717.6px;width:270px;height:1.4px;background:#3a3a3a"></div>
<div style="left:501px;top:717.6px;width:45px;height:1.4px;background:#3a3a3a"></div>
</body></html>
